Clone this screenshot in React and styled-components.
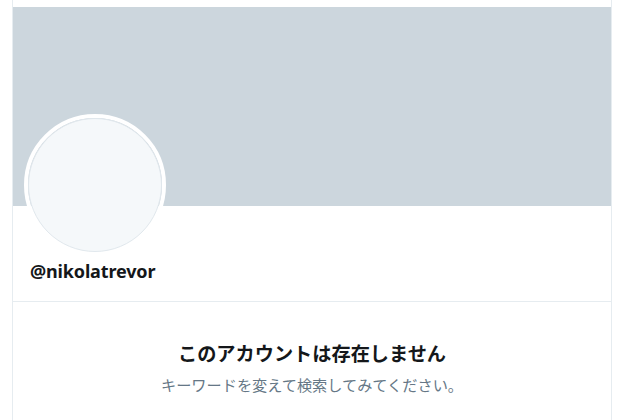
import React from 'react'
import styled, { createGlobalStyle } from 'styled-components'

const GlobalStyle = createGlobalStyle`
  html, body {
    margin: 0;
    padding: 0;
    background: #ffffff;
  }
  body {
    font-family: "Noto Sans", "Noto Sans CJK JP", sans-serif;
    color: #14171a;
  }
`

const Column = styled.div`
  width: 598px;
  min-height: 420px;
  margin-left: 12px;
  padding-top: 7px;
  border-left: 1px solid #e6ecf0;
  border-right: 1px solid #e6ecf0;
  box-sizing: content-box;
`

const Banner = styled.div`
  height: 199px;
  background: #ccd6dd;
`

const ProfileHeader = styled.div`
  padding: 0 0 18px 11px;
  border-bottom: 1px solid #e6ecf0;
`

const Avatar = styled.div`
  width: 134px;
  height: 134px;
  margin-top: -92px;
  border: 4px solid #ffffff;
  border-radius: 50%;
  position: relative;
  &::after {
    content: '';
    position: absolute;
    inset: 0;
    border-radius: 50%;
    background: #f5f8fa;
    border: 1px solid #e1e8ed;
    box-sizing: border-box;
  }
`

const Handle = styled.div`
  margin: 3px 0 0 6px;
  font-size: 18px;
  font-weight: 700;
  line-height: 24px;
  letter-spacing: -0.15px;
`

const Empty = styled.div`
  padding-top: 38px;
  text-align: center;
`

const EmptyTitle = styled.div`
  font-family: "Noto Sans CJK JP", sans-serif;
  font-size: 19.2px;
  font-weight: 700;
  line-height: 26px;
`

const EmptyText = styled.div`
  margin-top: 8px;
  font-family: "Noto Sans CJK JP", sans-serif;
  font-size: 15.2px;
  line-height: 20px;
  color: #657786;
`

export default function App() {
  return (
    <>
      <GlobalStyle />
      <Column>
        <Banner />
        <ProfileHeader>
          <Avatar />
          <Handle>@nikolatrevor</Handle>
        </ProfileHeader>
        <Empty>
          <EmptyTitle>このアカウントは存在しません</EmptyTitle>
          <EmptyText>キーワードを変えて検索してみてください。</EmptyText>
        </Empty>
      </Column>
    </>
  )
}
